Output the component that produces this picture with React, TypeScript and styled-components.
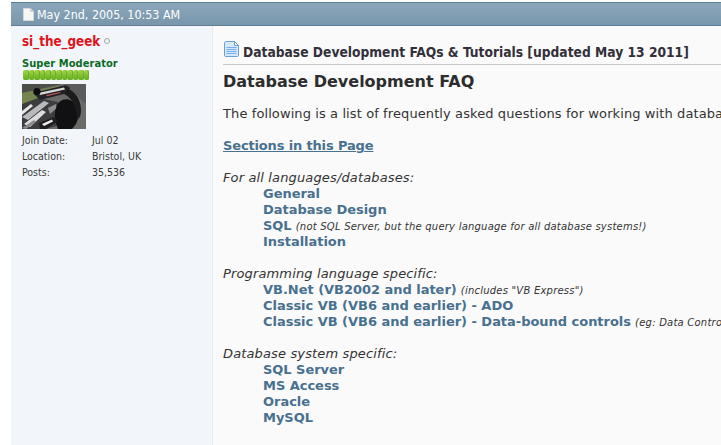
import React from "react";
import styled, { createGlobalStyle } from "styled-components";

const GlobalStyle = createGlobalStyle`
    html, body {
        margin: 0;
        padding: 0;
        background: #ffffff;
        overflow: hidden;
    }
`;

const SIDE_STATS = [
    { label: "Join Date:", value: "Jul 02" },
    { label: "Location:", value: "Bristol, UK" },
    { label: "Posts:", value: "35,536" },
];

const DocIcon = () => (
    <svg width="11" height="13" viewBox="0 0 11 13">
        <path d="M0.5 0.5H7.5L10.5 3.5V12.5H0.5Z" fill="#f6f6f2" stroke="#d4d8da" />
        <path d="M7.5 0.5V3.5H10.5" fill="#dcdcd8" stroke="#c9ccce" />
    </svg>
);

const PostIcon = () => (
    <svg width="15" height="16" viewBox="0 0 15 16">
        <path d="M0.5 2C0.5 1 1 0.5 2 0.5H10.5L14.5 4.5V14C14.5 15 14 15.5 13 15.5H2C1 15.5 0.5 15 0.5 14Z" fill="#d6e8fa" stroke="#6b9fd8" />
        <path d="M10.5 0.5V4.5H14.5Z" fill="#ffffff" stroke="#6b9fd8" />
        <path d="M2.5 6.5H12.5M2.5 8.5H12.5M2.5 10.5H12.5M2.5 12.5H12.5" stroke="#74aeea" strokeWidth="1" />
    </svg>
);

const CarAvatar = () => (
    <svg width="64" height="45" viewBox="0 0 64 45">
        <rect width="64" height="45" fill="#6b6a68" />
        <path d="M0 0H40L0 9Z" fill="#4b4f48" />
        <path d="M0 9L36 2L42 7L0 24Z" fill="#75854e" />
        <path d="M44 0H64V20L50 8Z" fill="#5c5a5a" />
        <path d="M0 20L16 14L36 18L40 40L24 45H0Z" fill="#3d3d40" />
        <path d="M11 9L44 1L48 4L46 9L18 16Z" fill="#232325" />
        <path d="M16 9L42 3.5L43 5.5L18 11Z" fill="#d9d9d9" />
        <path d="M24 11L38 8L38.5 9L25 12.2Z" fill="#b9525a" />
        <path d="M0 33L22 17L27 19L6 36Z" fill="#b8babc" />
        <path d="M2 40L20 26L24 28L8 43Z" fill="#dcdce0" />
        <path d="M0 27L9 20L11 22L0 31Z" fill="#e6e6e6" />
        <path d="M26 24L34 20L35 24L28 30Z" fill="#8d8f92" />
        <circle cx="15" cy="7.5" r="3.6" fill="#0c0c0e" />
        <path d="M34 24C36 16 44 13 50 17C56 21 58 32 54 40L50 45H36C33 38 32 30 34 24Z" fill="#111113" />
        <path d="M46 5C53 7 59 16 59 26C59 31 58 34 55 36C55 25 51 14 42 10Z" fill="#1b1b1d" />
        <path d="M17 39L32 33L36 37L24 45H18Z" fill="#1d1d1f" />
        <path d="M20 40L30 35.5L31 37.5L22 42Z" fill="#ececec" />
        <path d="M0 44L12 36L14 38L4 45Z" fill="#8a8a8c" />
    </svg>
);

const Bars = () => (
    <RepBar>
        {Array.from({ length: 12 }).map((_, i) => (
            <RepPip key={i} />
        ))}
    </RepBar>
);

const App = () => {
    return (
        <Page>
            <GlobalStyle />
            <PostHeader>
                <DocIcon />
                <PostDate>May 2nd, 2005, 10:53 AM</PostDate>
            </PostHeader>

            <PostBody>
                <SideBar>
                    <UserLine>
                        <UserName>si_the_geek</UserName>
                        <OfflineDot />
                    </UserLine>
                    <UserTitle>Super Moderator</UserTitle>
                    <Bars />
                    <AvatarBox>
                        <CarAvatar />
                    </AvatarBox>
                    <StatList>
                        {SIDE_STATS.map((stat) => (
                            <StatRow key={stat.label}>
                                <span>{stat.label}</span>
                                <span>{stat.value}</span>
                            </StatRow>
                        ))}
                    </StatList>
                </SideBar>

                <Content>
                    <TitleRow>
                        <PostIcon />
                        <PostTitle>Database Development FAQs &amp; Tutorials [updated May 13 2011]</PostTitle>
                    </TitleRow>
                    <PostSeparator />
                    <Heading>Database Development FAQ</Heading>
                    <Intro>The following is a list of frequently asked questions for working with databases</Intro>
                    <SectionLink href="#">Sections in this Page</SectionLink>

                    <Group>
                        <GroupTitle>For all languages/databases:</GroupTitle>
                        <Item><ItemLink href="#">General</ItemLink></Item>
                        <Item><ItemLink href="#">Database Design</ItemLink></Item>
                        <Item>
                            <ItemLink href="#">SQL</ItemLink> <Note>(not SQL Server, but the query language for all database systems!)</Note>
                        </Item>
                        <Item><ItemLink href="#">Installation</ItemLink></Item>
                    </Group>

                    <Group>
                        <GroupTitle>Programming language specific:</GroupTitle>
                        <Item>
                            <ItemLink href="#">VB.Net (VB2002 and later)</ItemLink> <Note>(includes "VB Express")</Note>
                        </Item>
                        <Item><ItemLink href="#">Classic VB (VB6 and earlier) - ADO</ItemLink></Item>
                        <Item>
                            <ItemLink href="#">Classic VB (VB6 and earlier) - Data-bound controls</ItemLink> <Note>(eg: Data Control)</Note>
                        </Item>
                    </Group>

                    <Group>
                        <GroupTitle>Database system specific:</GroupTitle>
                        <Item><ItemLink href="#">SQL Server</ItemLink></Item>
                        <Item><ItemLink href="#">MS Access</ItemLink></Item>
                        <Item><ItemLink href="#">Oracle</ItemLink></Item>
                        <Item><ItemLink href="#">MySQL</ItemLink></Item>
                    </Group>
                </Content>
            </PostBody>
        </Page>
    );
};

const TAHOMA_LIKE = `"DejaVu Sans Condensed", "DejaVu Sans", sans-serif`;

const Page = styled.div`
    width: 721px;
    height: 445px;
    padding: 2px 0 0 11px;
    box-sizing: border-box;
    overflow: hidden;
    background: #ffffff;
    display: flex;
    flex-direction: column;
`;

const PostHeader = styled.div`
    height: 24px;
    flex: none;
    box-sizing: border-box;
    padding: 0 0 0 12px;
    border-top: 1px solid #5f7f96;
    border-bottom: 1px solid #5f7f96;
    background: linear-gradient(#8ba7bb, #7896ac);
    display: flex;
    align-items: center;
    gap: 3px;
`;

const PostDate = styled.span`
    padding-top: 1px;
    font: 12.4px ${TAHOMA_LIKE};
    font-stretch: condensed;
    color: #ffffff;
    white-space: nowrap;
`;

const PostBody = styled.div`
    flex: 1;
    min-height: 0;
    display: flex;
`;

const SideBar = styled.div`
    width: 202px;
    flex: none;
    box-sizing: border-box;
    padding: 7px 0 0 11px;
    background: #f2f6fa;
    border-right: 1px solid #e6ecf2;
`;

const UserLine = styled.div`
    display: flex;
    align-items: center;
    gap: 4px;
    height: 16px;
`;

const UserName = styled.span`
    font: bold 13.3px ${TAHOMA_LIKE};
    font-stretch: condensed;
    color: #e0121a;
`;

const OfflineDot = styled.span`
    width: 4px;
    height: 4px;
    border: 1px solid #a8a8a8;
    border-radius: 50%;
`;

const UserTitle = styled.div`
    margin-top: 8px;
    font: bold 11px/14px ${TAHOMA_LIKE};
    font-stretch: condensed;
    letter-spacing: 0.07px;
    color: #0b6a1e;
    height: 13px;
`;

const RepBar = styled.div`
    display: flex;
    width: max-content;
    height: 10px;
    margin: 0 0 0 1px;
`;

const RepPip = styled.span`
    width: 5.5px;
    height: 10px;
    border-radius: 2px;
    background: linear-gradient(#a2d648, #63ae1f);
    box-shadow: inset -1px 0 #6fae2a;
`;

const AvatarBox = styled.div`
    margin-top: 4px;
    height: 45px;

    svg {
        display: block;
    }
`;

const StatList = styled.div`
    margin-top: 3px;
`;

const StatRow = styled.div`
    display: grid;
    grid-template-columns: 70px 1fr;
    font: 10.5px/16px ${TAHOMA_LIKE};
    font-stretch: condensed;
    color: #3a3a3a;
`;

const Content = styled.div`
    flex: 1;
    min-width: 0;
    box-sizing: border-box;
    padding: 14px 0 0 10px;
    background: #fafafa;
    overflow: hidden;
    font: 13px/16px "DejaVu Sans", Verdana, sans-serif;
    color: #333333;
`;

const TitleRow = styled.div`
    display: flex;
    align-items: flex-start;
    gap: 5px;
    height: 21px;

    svg {
        margin: 1px 0 0 1px;
        flex: none;
    }
`;

const PostTitle = styled.span`
    margin-left: -1px;
    padding-top: 3px;
    font: bold 13.7px/18px ${TAHOMA_LIKE};
    font-stretch: condensed;
    color: #33303a;
    white-space: nowrap;
`;

const PostSeparator = styled.hr`
    margin: 3px 0 0 0;
    border: none;
    height: 1px;
    background: #c8c8c8;
`;

const Heading = styled.div`
    margin-top: 7px;
    font: bold 16px/20px "DejaVu Sans", Verdana, sans-serif;
    color: #2d2d2d;
    white-space: nowrap;
`;

const Intro = styled.div`
    margin-top: 14px;
    white-space: nowrap;
    letter-spacing: 0.1px;
`;

const SectionLink = styled.a`
    display: block;
    margin-top: 16px;
    width: max-content;
    font-weight: bold;
    letter-spacing: -0.15px;
    color: #48708f;
    text-decoration: underline;
`;

const Group = styled.div`
    margin-top: 16px;
    white-space: nowrap;
`;

const GroupTitle = styled.div`
    font-style: italic;
    letter-spacing: 0.14px;
`;

const Item = styled.div`
    padding-left: 40px;
`;

const ItemLink = styled.a`
    font-weight: bold;
    letter-spacing: -0.03px;
    color: #48708f;
    text-decoration: none;
`;

const Note = styled.span`
    font-size: 10px;
    line-height: 1;
    font-style: italic;
    letter-spacing: 0.22px;
`;

export default App;
